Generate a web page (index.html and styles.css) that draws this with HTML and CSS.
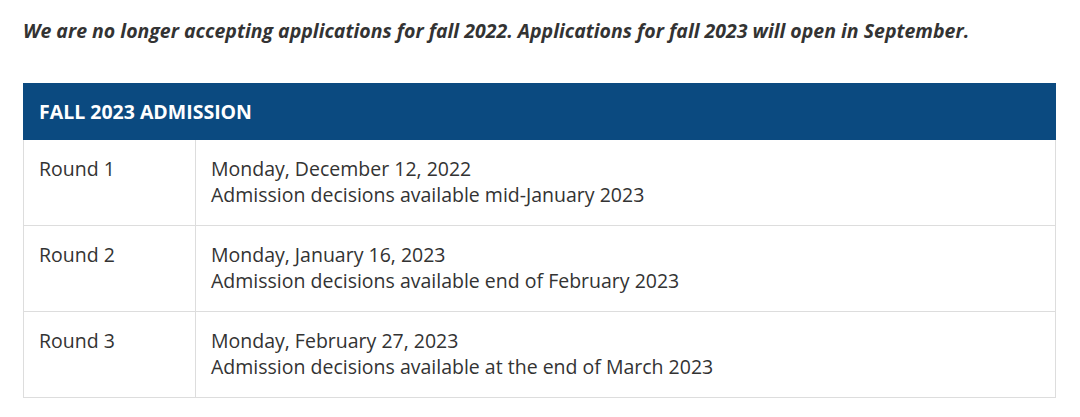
FILE: index.html
```html
<!DOCTYPE html>
<html lang="en">
<head>
<meta charset="utf-8">
<title>Fall 2023 Admission</title>
<link rel="stylesheet" href="styles.css">
</head>
<body>
<main class="page">
  <p class="notice">We are no longer accepting applications for fall 2022. Applications for fall 2023 will open in September.</p>
  <table class="deadlines">
    <thead>
      <tr><th colspan="2" class="head">FALL 2023 ADMISSION</th></tr>
    </thead>
    <tbody>
      <tr>
        <td class="round">Round 1</td>
        <td class="info">Monday, December 12, 2022<br>Admission decisions available mid-January 2023</td>
      </tr>
      <tr>
        <td class="round">Round 2</td>
        <td class="info">Monday, January 16, 2023<br>Admission decisions available end of February 2023</td>
      </tr>
      <tr>
        <td class="round">Round 3</td>
        <td class="info">Monday, February 27, 2023<br>Admission decisions available at the end of March 2023</td>
      </tr>
    </tbody>
  </table>
</main>
</body>
</html>
```

FILE: styles.css
```css
html, body {
  margin: 0;
  padding: 0;
  background: #ffffff;
}
.page {
  padding: 18px 23px 0 23px;
  font-family: "Open Sans", "Liberation Sans", sans-serif;
  color: #333333;
}
.notice {
  margin: 0 0 39px 0;
  font-size: 19.5px;
  line-height: 26px;
  font-weight: 700;
  font-style: italic;
  color: #333333;
}
.deadlines {
  width: 1033px;
  border-collapse: collapse;
  font-size: 19.5px;
  line-height: 26px;
}
.head {
  background: #0b4a80;
  color: #ffffff;
  font-weight: 700;
  text-align: left;
  height: 56px;
  padding: 0 15px;
  border: 1px solid #0b4a80;
  box-sizing: border-box;
}
.deadlines td {
  border: 1px solid #dddddd;
  vertical-align: top;
  padding: 16px 15px 17px 15px;
  height: 85px;
  box-sizing: border-box;
}
.round {
  width: 172px;
}
```
